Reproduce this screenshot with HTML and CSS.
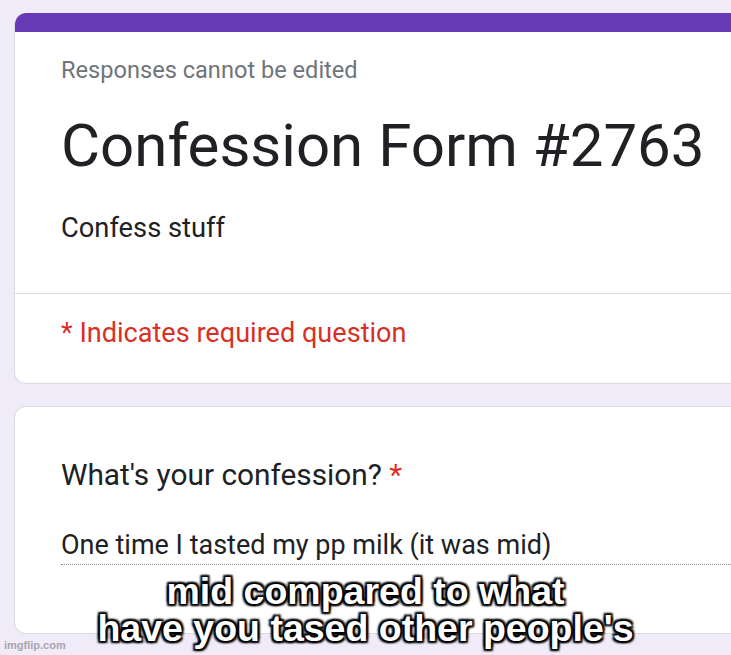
FILE: index.html
```html
<!DOCTYPE html>
<html>
<head>
<meta charset="utf-8">
<link rel="stylesheet" href="styles.css">
</head>
<body>
<div class="page">
  <div class="card card-head">
    <div class="bar"></div>
    <div class="head-main">
      <div class="note">Responses cannot be edited</div>
      <div class="title">Confession Form #2763</div>
      <div class="desc">Confess stuff</div>
    </div>
    <div class="head-foot">
      <div class="required">* Indicates required question</div>
    </div>
  </div>
  <div class="card card-q">
    <div class="question">What's your confession? <span class="star">*</span></div>
    <div class="answer">One time I tasted my pp milk (it was mid)</div>
  </div>
</div>
<div class="caption">mid compared to what<br>have you tased other people's</div>
<div class="watermark">imgflip.com</div>
</body>
</html>
```
FILE: styles.css
```css
html, body {
  margin: 0;
  padding: 0;
  width: 731px;
  height: 655px;
  overflow: hidden;
  background: #efebf8;
  font-family: Roboto, "Liberation Sans", sans-serif;
  position: relative;
}
.page {
  padding: 13px 0 0 14px;
}
.card {
  width: 820px;
  background: #fff;
  border: 1px solid #dadce0;
  border-radius: 12px;
  box-sizing: border-box;
  overflow: hidden;
}
.card-head {
  border-top: none;
}
.bar {
  height: 19px;
  background: #673ab7;
  margin: 0 -1px;
}
.head-main {
  padding: 24px 0 49px 46px;
  border-bottom: 1px solid #dadce0;
}
.note {
  font-size: 23.6px;
  line-height: 28px;
  color: #70757a;
}
.title {
  margin-top: 27px;
  font-size: 60px;
  line-height: 70px;
  color: #202124;
}
.desc {
  margin-top: 31px;
  font-size: 27.3px;
  line-height: 32px;
  color: #202124;
}
.head-foot {
  padding: 23px 0 34px 46px;
}
.required {
  font-size: 27.1px;
  line-height: 32px;
  color: #d93025;
}
.card-q {
  margin-top: 22px;
  padding: 51px 0 68px 46px;
}
.question {
  font-size: 29.8px;
  line-height: 34px;
  color: #202124;
}
.star {
  color: #d93025;
}
.answer {
  margin-top: 37px;
  width: 700px;
  font-size: 27px;
  line-height: 32px;
  padding-bottom: 3px;
  color: #202124;
  border-bottom: 1px dotted #8a8a8a;
}
.caption {
  position: absolute;
  left: 0;
  right: 0;
  top: 573px;
  text-align: center;
  font-family: "Liberation Sans", Arial, sans-serif;
  font-weight: bold;
  font-size: 37.5px;
  line-height: 37px;
  color: #fff;
  text-shadow: 0 0 3px #000, 0 0 3px #000, 2px 2px 2px #000, -2px -2px 2px #000, 2px -2px 2px #000, -2px 2px 2px #000;
}
.watermark {
  position: absolute;
  left: 4px;
  top: 639px;
  font-family: "Liberation Sans", Arial, sans-serif;
  font-size: 11px;
  font-weight: bold;
  color: #a8a6ad;
}
```
